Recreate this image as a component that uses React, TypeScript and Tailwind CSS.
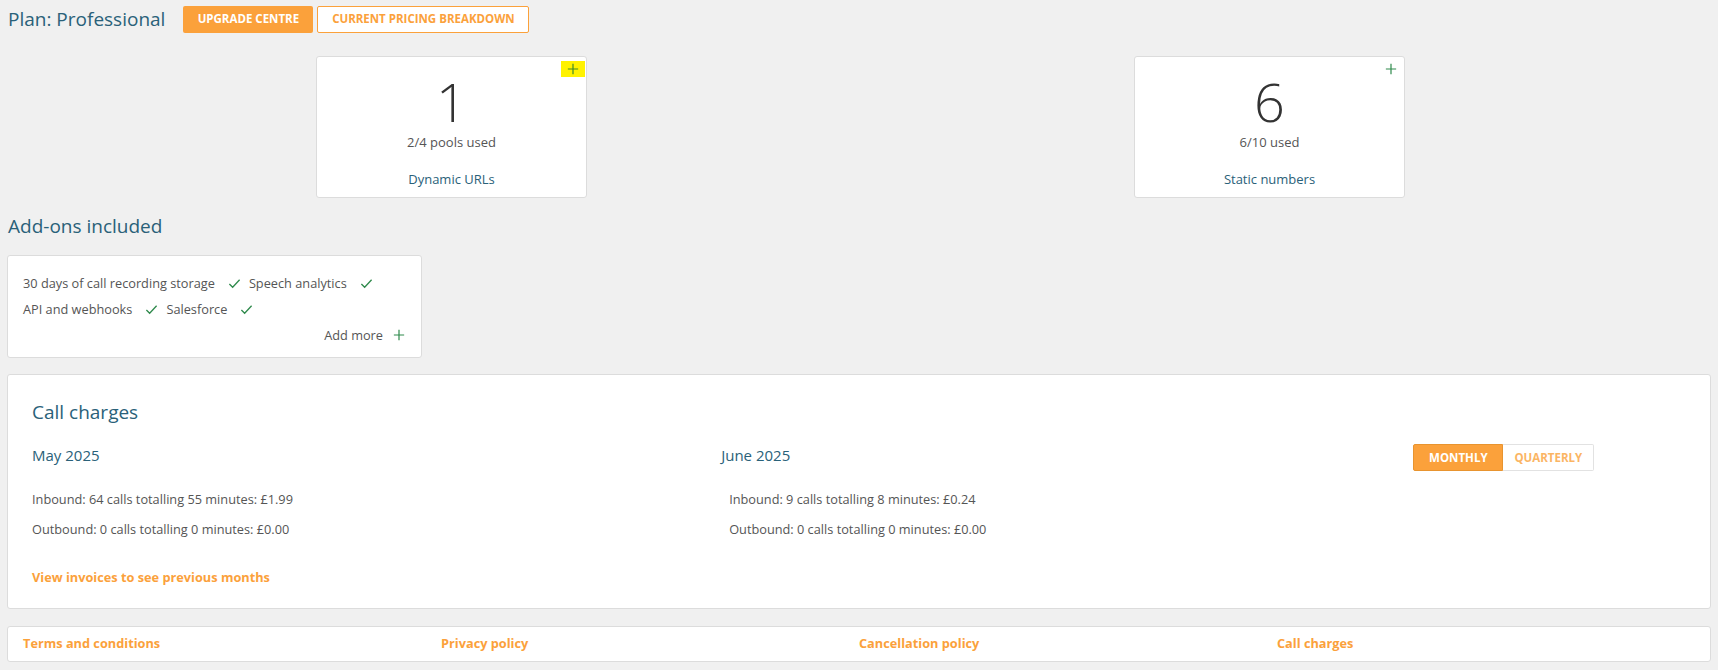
import React from 'react';

const font = { fontFamily: '"Open Sans", "Liberation Sans", sans-serif' };

const Plus = ({ className }: { className?: string }) => (
    <svg viewBox="0 0 14 14" className={className} fill="none" stroke="currentColor" strokeWidth="1.4">
        <path d="M7 1v12M1 7h12" />
    </svg>
);

const Check = () => (
    <svg viewBox="0 0 14 14" className="w-[13px] h-[13px] text-[#2f8a4c] ml-[13px] mr-[8px]" fill="none" stroke="currentColor" strokeWidth="1.4">
        <path d="M1.5 7.5l3.5 3.5 7.5-8" />
    </svg>
);

const UsageCard = ({ count, used, label, highlight }: { count: string; used: string; label: string; highlight?: boolean }) => (
    <div className="relative w-[271px] h-[142px] bg-white border border-[#dcdcdc] rounded-[3px] flex flex-col items-center">
        <div className={`absolute top-[4px] right-[1px] w-[24px] h-[16px] flex items-center justify-center ${highlight ? 'bg-[#fff200]' : ''}`}>
            <Plus className={`w-[12px] h-[12px] ${highlight ? 'text-[#3f8a2a]' : 'text-[#2f8a4c]'}`} />
        </div>
        <div className="mt-[15px] h-[58px] text-[54px] leading-[58px] font-light text-[#333]">{count}</div>
        <div className="mt-[3px] text-[13px] leading-[18px] text-[#555]">{used}</div>
        <div className="mt-[19px] text-[13px] text-[#2a6179]">{label}</div>
    </div>
);

const AddOn = ({ name }: { name: string }) => (
    <span className="inline-flex items-center">
        <span>{name}</span>
        <Check />
    </span>
);

const App: React.FC = () => {
    return (
        <div className="min-h-screen bg-[#f0f0f0] px-[7px] pt-[5px] pb-[8px]" style={font}>
            <div className="flex items-center h-[28px]">
                <h1 className="ml-[1px] text-[19px] text-[#2a6179]">Plan: Professional</h1>
                <button className="ml-[18px] h-[27px] w-[130px] bg-[#fba13b] text-white text-[11.5px] font-bold rounded-[2px]">
                    UPGRADE CENTRE
                </button>
                <button className="ml-[4px] h-[27px] w-[212px] bg-white border border-[#fba13b] text-[#fba13b] text-[11.5px] font-bold rounded-[2px]">
                    CURRENT PRICING BREAKDOWN
                </button>
            </div>

            <div className="flex mt-[23px]">
                <div className="ml-[309px]">
                    <UsageCard count="1" used="2/4 pools used" label="Dynamic URLs" highlight />
                </div>
                <div className="ml-[547px]">
                    <UsageCard count="6" used="6/10 used" label="Static numbers" />
                </div>
            </div>

            <h2 className="mt-[15px] ml-[1px] text-[19px] text-[#2a6179] leading-[26px]">Add-ons included</h2>

            <div className="mt-[16px] w-[415px] h-[103px] bg-white border border-[#dcdcdc] rounded-[3px] px-[15px] pt-[14px] text-[12.75px] text-[#555]">
                <div className="flex flex-wrap items-center leading-[26px]">
                    <AddOn name="30 days of call recording storage" />
                    <AddOn name="Speech analytics" />
                </div>
                <div className="flex flex-wrap items-center leading-[26px]">
                    <AddOn name="API and webhooks" />
                    <AddOn name="Salesforce" />
                </div>
                <div className="flex justify-end items-center leading-[26px] pr-[1px]">
                    <span>Add more</span>
                    <Plus className="w-[12px] h-[12px] text-[#2f8a4c] ml-[10px]" />
                </div>
            </div>

            <div className="mt-[16px] bg-white border border-[#dcdcdc] rounded-[3px] px-[24px] pt-[24px] h-[235px]">
                <h2 className="text-[19px] text-[#2a6179] leading-[26px]">Call charges</h2>
                <div className="grid grid-cols-12 mt-[20px]">
                    <div className="col-span-5">
                        <h3 className="text-[15px] text-[#2a6179] leading-[20px]">May 2025</h3>
                        <div className="mt-[19px] text-[12.75px] text-[#555] leading-[30px]">
                            <p>Inbound: 64 calls totalling 55 minutes: £1.99</p>
                            <p>Outbound: 0 calls totalling 0 minutes: £0.00</p>
                        </div>
                    </div>
                    <div className="col-span-5">
                        <h3 className="text-[15px] text-[#2a6179] leading-[20px]">June 2025</h3>
                        <div className="mt-[19px] ml-[8px] text-[12.75px] text-[#555] leading-[30px]">
                            <p>Inbound: 9 calls totalling 8 minutes: £0.24</p>
                            <p>Outbound: 0 calls totalling 0 minutes: £0.00</p>
                        </div>
                    </div>
                    <div className="col-span-2">
                        <div className="flex mt-[-1px] ml-[3px]">
                            <button className="h-[27px] w-[90px] bg-[#fba13b] border border-[#e8942f] text-white text-[11.5px] font-bold rounded-l-[2px]">
                                MONTHLY
                            </button>
                            <button className="h-[27px] w-[91px] bg-white border border-l-0 border-[#e2e2e2] text-[#fbb564] text-[11.5px] font-bold rounded-r-[2px]">
                                QUARTERLY
                            </button>
                        </div>
                    </div>
                </div>
                <a className="block mt-[24px] text-[12.75px] font-bold text-[#fba13b]">View invoices to see previous months</a>
            </div>

            <div className="mt-[17px] h-[36px] bg-white border border-[#dcdcdc] rounded-[3px] px-[15px] grid grid-cols-4 items-center text-[12.75px] font-bold text-[#fba13b]">
                <a>Terms and conditions</a>
                <a>Privacy policy</a>
                <a>Cancellation policy</a>
                <a>Call charges</a>
            </div>
        </div>
    );
};

export default App;
